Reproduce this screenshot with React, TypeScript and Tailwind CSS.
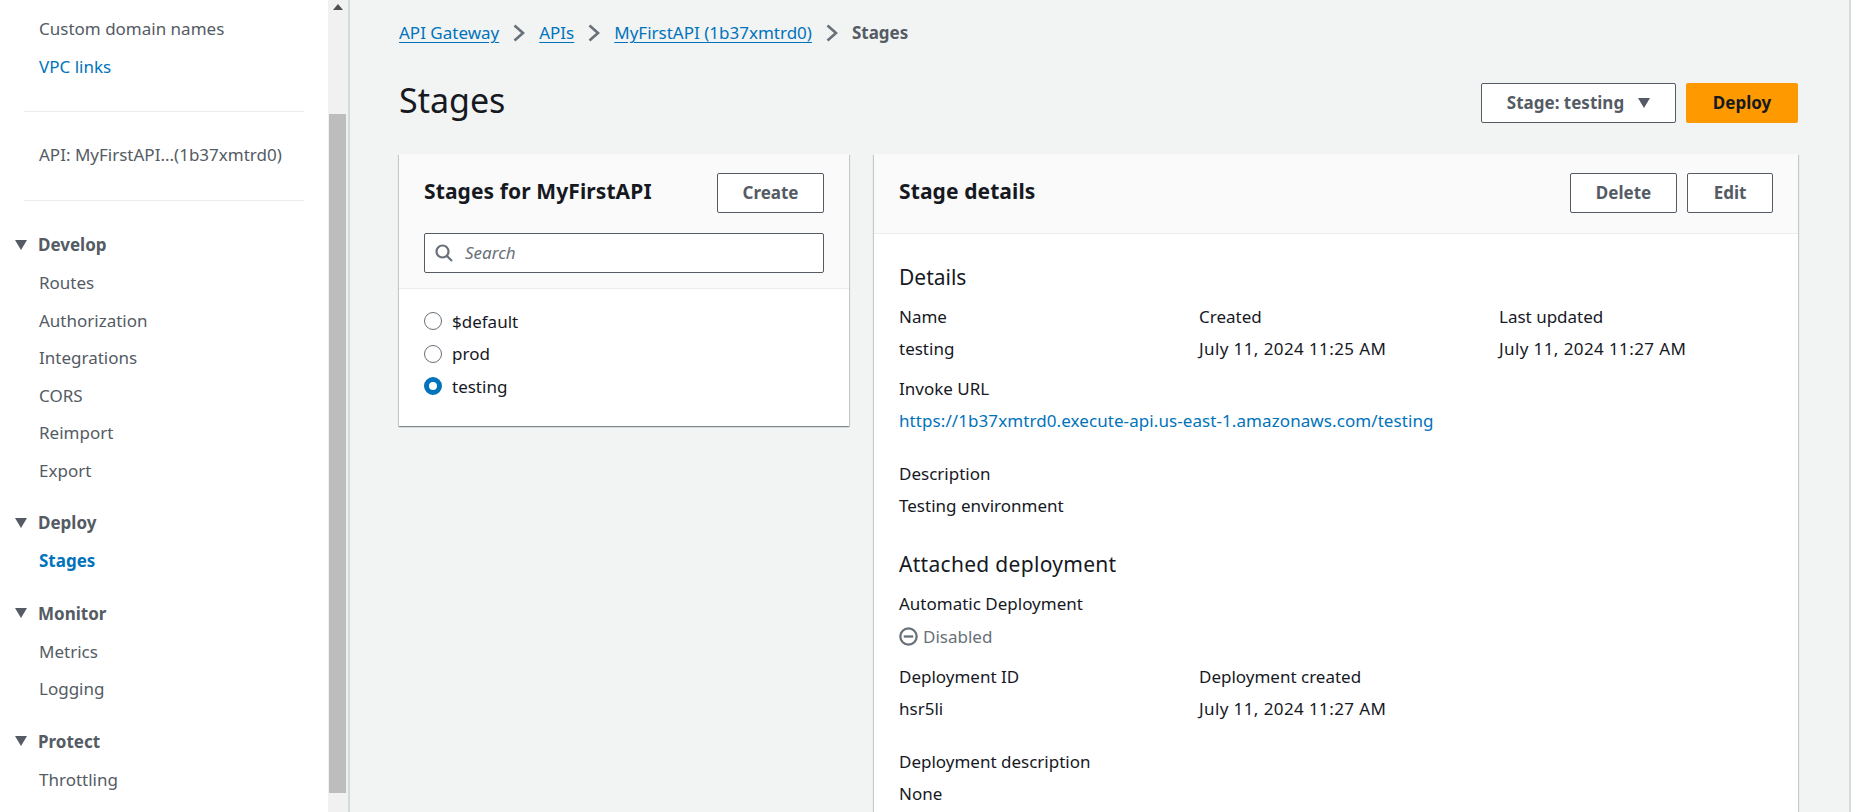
const navTop = [
  { label: "Custom domain names", className: "text-[#545b64]" },
  { label: "VPC links", className: "text-[#0073bb]" },
];

const navGroups = [
  { title: "Develop", items: ["Routes", "Authorization", "Integrations", "CORS", "Reimport", "Export"] },
  { title: "Deploy", items: ["Stages"] },
  { title: "Monitor", items: ["Metrics", "Logging"] },
  { title: "Protect", items: ["Throttling"] },
];

const Caret = ({ className }: { className: string }) => (
  <svg viewBox="0 0 12 10" className={className}>
    <path d="M0 0H12L6 10Z" fill="#545b64" />
  </svg>
);

const Chevron = () => (
  <svg viewBox="0 0 12 18" className="w-3 h-[18px] ml-[14px] mr-[14px] shrink-0" fill="none" stroke="#687078" strokeWidth="2.6">
    <path d="M1.5 1.5L10 9L1.5 16.5" />
  </svg>
);

const Button = ({ label, className }: { label: string; className: string }) => (
  <button className={`h-10 border border-[#545b64] rounded-[2px] bg-white text-[#545b64] font-bold flex items-center justify-center ${className}`}>
    {label}
  </button>
);

const Radio = ({ label, checked }: { label: string; checked?: boolean }) => (
  <div className="flex items-center h-[32.5px]">
    {checked ? (
      <div className="w-[18px] h-[18px] rounded-full border-[5px] border-[#0073bb] bg-white" />
    ) : (
      <div className="w-[18px] h-[18px] rounded-full border-[1.5px] border-[#687078] bg-white" />
    )}
    <span className="ml-[10px] text-[#16191f]">{label}</span>
  </div>
);

const Field = ({ label, value, className }: { label: string; value: React.ReactNode; className?: string }) => (
  <div className={className}>
    <div className="h-8 leading-8 text-[#16191f]">{label}</div>
    <div className="h-8 leading-8 text-[#16191f]">{value}</div>
  </div>
);

const DateText = ({ value }: { value: string }) => <span className="tracking-[0.4px]">{value}</span>;

export default function App() {
  return (
    <div className="flex h-[812px] w-[1851px] overflow-hidden bg-[#f2f3f3] text-[17px] font-['Noto_Sans',sans-serif]">
      <aside className="w-[328px] shrink-0 bg-white pt-[10px]">
        {navTop.map((item) => (
          <div key={item.label} className={`h-[37.5px] leading-[37.5px] pl-[39px] whitespace-nowrap ${item.className}`}>{item.label}</div>
        ))}
        <div className="mx-6 mt-[26px] border-t border-[#eaeded]" />
        <div className="h-[88px] leading-[86px] pl-[39px] text-[#545b64] whitespace-nowrap">API: MyFirstAPI...(1b37xmtrd0)</div>
        <div className="mx-6 border-t border-[#eaeded]" />
        <div className="pt-[24.5px]">
          {navGroups.map((group) => (
            <div key={group.title} className="mb-[14.5px]">
              <div className="h-[38.5px] flex items-center pl-[15px] font-bold text-[#545b64]">
                <Caret className="w-3 h-[10px] mr-[11px]" />
                {group.title}
              </div>
              {group.items.map((item) => (
                <div
                  key={item}
                  className={`h-[37.5px] leading-[37.5px] pl-[39px] ${item === "Stages" ? "font-bold text-[#0073bb]" : "text-[#545b64]"}`}
                >
                  {item}
                </div>
              ))}
            </div>
          ))}
        </div>
      </aside>

      <div className="w-[22px] shrink-0 bg-[#f1f1f1] border-r-2 border-[#d5dbdb] flex flex-col items-center pr-[1px]">
        <div className="h-[114px] w-full flex justify-center pt-[4px]">
          <svg viewBox="0 0 10 6" className="w-[10px] h-[6px]">
            <path d="M0 6L5 0L10 6Z" fill="#505050" />
          </svg>
        </div>
        <div className="w-[17px] h-[679px] bg-[#bdbdbd]" />
      </div>

      <main className="flex-1 min-w-0 pl-[49px] pr-[51px] border-r-2 border-[#d5dbdb]">
        <nav className="flex items-center h-[66px] text-[#0073bb] whitespace-nowrap">
          <span className="underline underline-offset-[3px]">API Gateway</span>
          <Chevron />
          <span className="underline underline-offset-[3px]">APIs</span>
          <Chevron />
          <span className="underline underline-offset-[3px]">MyFirstAPI (1b37xmtrd0)</span>
          <Chevron />
          <span className="font-bold text-[#545b64]">Stages</span>
        </nav>
        <div className="flex items-center justify-between h-[68px] pt-[7px] mt-[-1px]">
          <h1 className="text-[34px] text-[#16191f] mb-[5px]">Stages</h1>
          <div className="flex gap-[10px]">
            <button className="w-[195px] h-10 border border-[#545b64] rounded-[2px] bg-white text-[#545b64] font-bold flex items-center justify-center gap-[14px]">
              Stage: testing
              <Caret className="w-3 h-[10px]" />
            </button>
            <button className="w-[112px] h-10 rounded-[2px] bg-[#ff9900] text-[#16191f] font-bold">Deploy</button>
          </div>
        </div>
        <div className="flex items-start gap-[25px] mt-[21px]">
          <section className="w-[450px] shrink-0 bg-white shadow-[0_1px_1px_0_rgba(0,28,36,0.3),1px_1px_1px_0_rgba(0,28,36,0.15),-1px_1px_1px_0_rgba(0,28,36,0.15)]">
            <div className="bg-[#fafafa] border-b border-[#eaeded] px-[25px] pt-[19px] pb-[15px]">
              <div className="flex items-center justify-between">
                <h2 className="text-[21px] font-bold text-[#16191f] mb-[3px] whitespace-nowrap tracking-[0.1px]">Stages for MyFirstAPI</h2>
                <Button label="Create" className="w-[107px]" />
              </div>
              <div className="mt-[20px] h-10 border border-[#545b64] rounded-[2px] bg-white flex items-center pl-[10px]">
                <svg viewBox="0 0 18 18" className="w-[18px] h-[18px]" fill="none" stroke="#687078" strokeWidth="2.2">
                  <circle cx="7.5" cy="7.5" r="6" />
                  <path d="M12 12L17 17" />
                </svg>
                <span className="ml-[12px] italic text-[#687078]">Search</span>
              </div>
            </div>
            <div className="px-[25px] pt-[16px] pb-[23px]">
              <Radio label="$default" />
              <Radio label="prod" />
              <Radio label="testing" checked />
            </div>
          </section>

          <section className="flex-1 min-w-0 pb-10 bg-white shadow-[0_1px_1px_0_rgba(0,28,36,0.3),1px_1px_1px_0_rgba(0,28,36,0.15),-1px_1px_1px_0_rgba(0,28,36,0.15)]">
            <div className="h-[80px] bg-[#fafafa] border-b border-[#eaeded] pl-[25px] pr-[25px] pb-[2px] flex items-center justify-between">
              <h2 className="text-[21px] font-bold text-[#16191f] mb-[2px] tracking-[0.1px]">Stage details</h2>
              <div className="flex gap-[10px]">
                <Button label="Delete" className="w-[107px]" />
                <Button label="Edit" className="w-[86px]" />
              </div>
            </div>
            <div className="pl-[25px] pr-[25px] pt-[27px]">
              <h3 className="text-[21px] leading-8 text-[#16191f]">Details</h3>
              <div className="grid grid-cols-[300px_300px_300px] mt-[8px]">
                <Field label="Name" value="testing" />
                <Field label="Created" value={<DateText value="July 11, 2024 11:25 AM" />} />
                <Field label="Last updated" value={<DateText value="July 11, 2024 11:27 AM" />} />
              </div>
              <Field
                className="mt-[8px]"
                label="Invoke URL"
                value={<span className="text-[#0073bb] tracking-[0.08px]">https://1b37xmtrd0.execute-api.us-east-1.amazonaws.com/testing</span>}
              />
              <Field className="mt-[21px]" label="Description" value="Testing environment" />
              <h3 className="mt-[26px] text-[21px] leading-8 text-[#16191f] tracking-[0.3px]">Attached deployment</h3>
              <div className="mt-[8px] h-8 leading-8 text-[#16191f]">Automatic Deployment</div>
              <div className="h-[35px] pb-[2px] flex items-center gap-[5px] text-[#687078]">
                <svg viewBox="0 0 20 20" className="w-[19px] h-[19px]" fill="none" stroke="#687078" strokeWidth="2.4">
                  <circle cx="10" cy="10" r="8.6" />
                  <path d="M5 10H15" />
                </svg>
                Disabled
              </div>
              <div className="grid grid-cols-[300px_300px] mt-[6px]">
                <Field label="Deployment ID" value="hsr5li" />
                <Field label="Deployment created" value={<DateText value="July 11, 2024 11:27 AM" />} />
              </div>
              <Field className="mt-[21px]" label="Deployment description" value="None" />
            </div>
          </section>
        </div>
      </main>
    </div>
  );
}
